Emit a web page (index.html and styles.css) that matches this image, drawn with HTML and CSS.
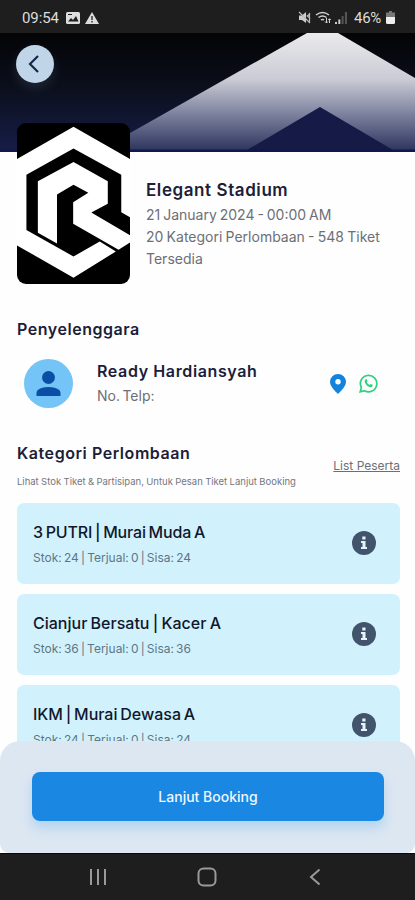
FILE: index.html
```html
<!DOCTYPE html>
<html lang="id">
<head>
<meta charset="utf-8">
<meta name="viewport" content="width=device-width, initial-scale=1">
<title>Elegant Stadium</title>
<link rel="stylesheet" href="styles.css">
</head>
<body>
<div class="phone">
  <header class="status">
    <span class="clock">09:54</span>
    <svg class="st-img" width="14" height="12" viewBox="0 0 14 12"><rect width="14" height="12" rx="1.5" fill="#ddd"/><path d="M2 9.5 5 6l2 2 3-4 2.5 5.500z" fill="#1e1e1e"/><path d="M2 2.500h4" stroke="#1e1e1e"/></svg>
    <svg class="st-warn" width="14" height="12" viewBox="0 0 14 12"><path d="M7 0 14 12H0z" fill="#ddd"/><path d="M7 4v4M7 9v1.500" stroke="#1e1e1e" stroke-width="1.300"/></svg>
    <span class="grow"></span>
    <svg class="st-mute" width="13" height="13" viewBox="0 0 13 13"><path d="M1 4.500h3L8 1v11L4 9H1z" fill="#ccc"/><path d="M1 1l11 11M9 4l3 4M12 2 9 6M11.500 2v9" stroke="#bbb" stroke-width="1.200" fill="none"/></svg>
    <svg class="st-wifi" width="17" height="13" viewBox="0 0 17 13" fill="none" stroke="#d0d0d0" stroke-width="1.500"><path d="M1 4q6.500-5 13 0M3.500 6.500q4-3 8 0M6 9q1.500-1.200 3 0"/><path d="M11.500 7v5M10 10.500l1.500 1.500 1.500-1.500M14.500 12V8M13.200 9l1.300-1.300L15.800 9" stroke-width="1"/></svg>
    <svg class="st-sig" width="12" height="12" viewBox="0 0 12 12"><path d="M0 10h2v2H0zM3.300 7.500h2V12h-2z" fill="#ccc"/><path d="M6.600 4h2v8h-2zM9.900 0H12v12H9.900z" fill="#555"/></svg>
    <span class="battery-text">46%</span>
    <svg class="st-bat" width="9" height="13" viewBox="0 0 9 13"><path d="M3 0h3v1.500h3V6H0V1.500h3z" fill="#777"/><path d="M0 6h9v5.500q0 1.500-1.500 1.500h-6Q0 13 0 11.500z" fill="#eee"/></svg>
  </header>

  <section class="hero">
    <svg class="hero-art" width="415" height="119" viewBox="0 33 415 119">
      <defs>
        <linearGradient id="sky" x1="0" y1="0" x2="0" y2="1"><stop offset="0" stop-color="#040406"/><stop offset=".45" stop-color="#0b0f1c"/><stop offset="1" stop-color="#171d48"/></linearGradient>
        <linearGradient id="peak" x1="0" y1="0" x2="0" y2="1"><stop offset="0" stop-color="#ebebed"/><stop offset=".4" stop-color="#c9cad4"/><stop offset=".72" stop-color="#767b99"/><stop offset="1" stop-color="#2f365f"/></linearGradient>
      </defs>
      <path d="M0 33h415v119H0z" fill="url(#sky)"/>
      <path d="M100 150 307 33h31l77 45v72z" fill="url(#peak)"/>
      <path d="M247 150 320 107l73 43z" fill="#151b46"/>
      <path d="M0 149.500h415v2.500H0z" fill="#11194c"/>
    </svg>
    <button class="back" aria-label="Kembali"><svg width="12" height="18" viewBox="0 0 12 18"><path d="M10 1 2 9l8 8" fill="none" stroke="#14284a" stroke-width="2.200"/></svg></button>
  </section>

  <main class="content">
    <section class="event">
      <svg class="logo" width="113" height="161" viewBox="51 39 336 480" preserveAspectRatio="none">
        <path d="M51 39h336v480H51z" fill="#000"/>
        <path d="M51 146 219 50l168 96v174l-26-15V193l-142-78-140 78v165l140 79 78-45 48 30-126 78-168-96z" fill="#fff"/>
        <path d="m219 155 102 58v67l-49 26 116 68v21l-35 22-135-78v-64l45-28-44-24-49 29v146l-57-32V213z" fill="#fff"/>
      </svg>
      <div class="event-text">
        <h1 class="event-title">Elegant Stadium</h1>
        <p class="date">21 January 2024 - 00:00 AM</p>
        <p class="tickets"><span class="tickets-first">20 Kategori Perlombaan - 548 Tiket</span><br>Tersedia</p>
      </div>
    </section>

    <h2 class="organizer-heading">Penyelenggara</h2>
    <section class="organizer">
      <svg class="avatar" width="49" height="49" viewBox="0 0 49 49"><circle cx="24.500" cy="24.500" r="24.500" fill="#74c4f7"/><circle cx="24.500" cy="18.500" r="6.500" fill="#0b4ea5"/><path d="M12.500 37v-3q0-3.500 5-5 7-2 14 0 5 1.500 5 5v3z" fill="#0b4ea5"/></svg>
      <div class="organizer-text">
        <h3 class="organizer-name">Ready Hardiansyah</h3>
        <p class="phone-number">No. Telp:</p>
      </div>
      <svg class="pin" width="16" height="20" viewBox="0 0 16 20"><path d="M8 0a8 8 0 0 1 8 8c0 4-5 9-8 12C5 17 0 12 0 8a8 8 0 0 1 8-8zm0 5a2.700 2.700 0 1 0 0 5.400A2.700 2.700 0 0 0 8 5z" fill="#1483dd"/></svg>
      <svg class="wa" width="19" height="19" viewBox="0 0 19 19"><path d="M1.200 17.800 2.400 13.500A8.200 8.200 0 1 1 5.500 16.700z" fill="none" stroke="#31cf80" stroke-width="1.700"/><path d="M6.700 5.300c.5-.4 1-.2 1.200.3l.6 1.400c.1.400-.5.900-.7 1.200.7 1.300 1.700 2.100 3 2.700.4-.4.800-1.100 1.200-.9l1.500.8c.4.300.1 1.200-.3 1.700-1.300 1.300-3.500.5-5.300-1.100C5.800 9.500 5 6.800 6.700 5.300z" fill="#31cf80"/></svg>
    </section>

    <section class="category-head">
      <div>
        <h2 class="category-title">Kategori Perlombaan</h2>
        <p class="hint">Lihat Stok Tiket &amp; Partisipan, Untuk Pesan Tiket Lanjut Booking</p>
      </div>
      <a class="list-link">List Peserta</a>
    </section>

    <section class="cards">
      <article class="card">
        <div><h3 class="card-title t1">3 PUTRI | Murai Muda A</h3><p class="stock">Stok: 24 | Terjual: 0 | Sisa: 24</p></div>
        <svg class="info" width="24" height="24" viewBox="0 0 24 24"><circle cx="12" cy="12" r="12" fill="#42546b"/><path d="M10.300 5.500h3.200v3h-3.200zM9 10h4.500v6H15v2H9v-2h1.500v-4H9z" fill="#e4f5fc"/></svg>
      </article>
      <article class="card">
        <div><h3 class="card-title t2">Cianjur Bersatu | Kacer A</h3><p class="stock">Stok: 36 | Terjual: 0 | Sisa: 36</p></div>
        <svg class="info" width="24" height="24" viewBox="0 0 24 24"><circle cx="12" cy="12" r="12" fill="#42546b"/><path d="M10.300 5.500h3.200v3h-3.200zM9 10h4.500v6H15v2H9v-2h1.500v-4H9z" fill="#e4f5fc"/></svg>
      </article>
      <article class="card">
        <div><h3 class="card-title t3">IKM | Murai Dewasa A</h3><p class="stock">Stok: 24 | Terjual: 0 | Sisa: 24</p></div>
        <svg class="info" width="24" height="24" viewBox="0 0 24 24"><circle cx="12" cy="12" r="12" fill="#42546b"/><path d="M10.300 5.500h3.200v3h-3.200zM9 10h4.500v6H15v2H9v-2h1.500v-4H9z" fill="#e4f5fc"/></svg>
      </article>
    </section>
  </main>

  <footer class="footer">
    <div class="booking"><button class="book-btn">Lanjut Booking</button></div>
    <nav class="nav">
      <svg width="18" height="18" viewBox="0 0 18 18"><path d="M2 1v16M9 1v16M16 1v16" stroke="#9a9a9a" stroke-width="2"/></svg>
      <svg class="home" width="20" height="20" viewBox="0 0 20 20"><rect x="1.500" y="1.500" width="17" height="17" rx="5" fill="none" stroke="#9a9a9a" stroke-width="2"/></svg>
      <svg width="12" height="18" viewBox="0 0 12 18"><path d="M10.500 1.500 2 9l8.500 7.500" fill="none" stroke="#9a9a9a" stroke-width="2"/></svg>
    </nav>
  </footer>
</div>
</body>
</html>
```

FILE: styles.css
```css
* { box-sizing: border-box; }
body, h1, h2, h3, p { margin: 0; }
body { background: #fff; font-family: Inter, sans-serif; color: #1b2038; }
svg { display: block; flex: none; }
button { border: 0; padding: 0; font: inherit; }
h1, h2, h3, p, a, span { white-space: nowrap; }

.phone { width: 415px; height: 900px; display: flex; flex-direction: column; overflow: hidden; position: relative; background: #fefefe; }

.status { height: 33px; flex: none; background: #1e1e1e; color: #dcdcdc; display: flex; align-items: center; padding: 2px 20px 0 22px; font-family: Roboto, sans-serif; font-size: 15px; }
.clock { width: 37px; letter-spacing: -0.1px; }
.st-img { margin-left: 7px; }
.st-warn { margin-left: 5px; }
.grow { flex: 1; }
.st-wifi { margin-left: 4px; }
.st-sig { margin-left: 3px; }
.battery-text { margin: 0 4px 0 7px; width: 28px; letter-spacing: -0.3px; }

.hero { height: 119px; flex: none; position: relative; padding: 12px 16px; }
.hero-art { position: absolute; inset: 0; }
.back { position: relative; width: 38px; height: 38px; border-radius: 50%; background: #c1d5e9; display: flex; align-items: center; justify-content: center; padding-right: 3px; box-shadow: 0 5px 12px rgba(160, 190, 220, .14); }

.content { flex: 1; min-height: 0; padding: 0 15px 0 17px; position: relative; }
.event { display: flex; gap: 16px; margin-top: -29px; }
.logo { border-radius: 9px; }
.event-text { padding-top: 55px; }
.event-title { font-size: 17px; line-height: 24px; font-weight: 600; letter-spacing: .58px; }
.date, .tickets { font-size: 14px; line-height: 22px; color: #6d6f76; word-spacing: -1px; }
.date { margin-top: 2px; }
.tickets-first { word-spacing: -.7px; }

.organizer-heading { margin-top: 33px; font-size: 16px; line-height: 24px; font-weight: 600; letter-spacing: .54px; }
.organizer { display: flex; align-items: center; padding: 0 22px 0 7px; margin-top: 18px; }
.organizer-text { margin-left: 24px; flex: 1; }
.organizer-name { font-size: 16px; line-height: 24px; font-weight: 600; letter-spacing: .62px; }
.phone-number { font-size: 14px; line-height: 24px; color: #6d6f76; margin-top: 1px; word-spacing: -1.5px; }
.wa { margin-left: 13px; }

.category-head { display: flex; justify-content: space-between; margin-top: 33px; }
.category-title { font-size: 16px; line-height: 24px; font-weight: 600; letter-spacing: .56px; }
.hint { font-size: 9.5px; line-height: 16px; margin-top: 9px; color: #74777e; word-spacing: -.3px; }
.list-link { font-size: 12px; line-height: 16px; margin-top: 17px; color: #6d6f76; text-decoration: underline; }

.cards { display: flex; flex-direction: column; gap: 10px; margin-top: 13px; }
.card { height: 81px; border-radius: 7px; background: #d1f2fd; padding: 17px 24px 0 16px; display: flex; justify-content: space-between; }
.card-title { font-size: 16px; line-height: 24px; font-weight: 500; color: #10172c; }
.t1 { word-spacing: -1.3px; letter-spacing: -.16px; }
.t2 { word-spacing: -1px; }
.t3 { word-spacing: -1.5px; }
.stock { font-size: 12px; line-height: 18px; margin-top: 5px; color: #5e7684; word-spacing: -1.2px; }
.info { margin-top: 11px; }

.footer { position: absolute; left: 0; right: 0; bottom: 0; }
.booking { height: 112px; border-radius: 20px 20px 9px 9px; background: #dde7f2; padding: 31px 31px 0 32px; }
.book-btn { display: block; width: 100%; height: 49px; border-radius: 8px; background: #1a88e3; color: #edf7ff; font-size: 14px; font-weight: 500; box-shadow: 0 7px 12px rgba(80, 170, 235, .3); }
.nav { height: 47px; background: #1e1e1e; border-top: 1px solid #080808; display: flex; align-items: center; padding: 0 94px 0 89px; justify-content: space-between; }
.home { margin-right: 3px; }
```
